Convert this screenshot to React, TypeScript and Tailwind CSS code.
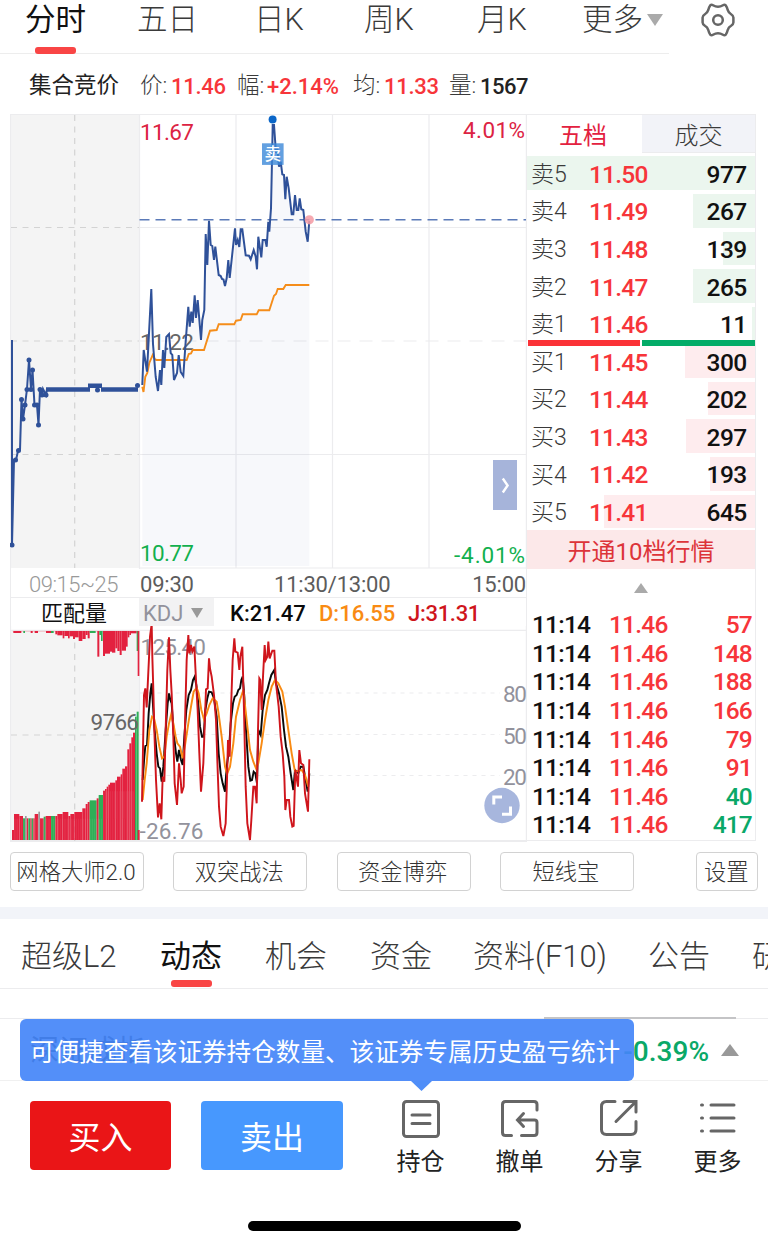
import React from 'react';

interface Level {
  label: string;
  price: string;
  volume: number;
}

interface Trade {
  volume: number;
  side: 'buy' | 'sell';
}

const MAX_VOLUME = 977;

const sellLevels: Level[] = [
  { label: '卖5', price: '11.50', volume: 977 },
  { label: '卖4', price: '11.49', volume: 267 },
  { label: '卖3', price: '11.48', volume: 139 },
  { label: '卖2', price: '11.47', volume: 265 },
  { label: '卖1', price: '11.46', volume: 11 },
];

const buyLevels: Level[] = [
  { label: '买1', price: '11.45', volume: 300 },
  { label: '买2', price: '11.44', volume: 202 },
  { label: '买3', price: '11.43', volume: 297 },
  { label: '买4', price: '11.42', volume: 193 },
  { label: '买5', price: '11.41', volume: 645 },
];

const trades: Trade[] = [
  { volume: 57, side: 'buy' },
  { volume: 148, side: 'buy' },
  { volume: 188, side: 'buy' },
  { volume: 166, side: 'buy' },
  { volume: 79, side: 'buy' },
  { volume: 91, side: 'buy' },
  { volume: 40, side: 'sell' },
  { volume: 417, side: 'sell' },
];

const auctionLine =
  '12,340 12,545 14,460 16,460 18,451 20,450 21.5,399 23,419 25,405 27,389 29,360 31,389 32.5,370 34.5,405 37,405 38.5,425 40,389 42,395 43,389 46,395 47,389';

const auctionDots = [
  [12, 545], [15.5, 460], [18.5, 450.5], [21.5, 399.5], [23, 419], [25, 405], [27, 389.5], [29, 360],
  [31, 389.5], [32.5, 370], [34.5, 405], [37, 405], [38.5, 425], [40, 389.5], [42, 395], [46, 395], [97.5, 390], [137.5, 385.5],
];

const priceLine =
  '142.3,385 143.7,350 147,371.7 151.3,289 153,344 155.7,377 158,391 160,370 161.3,385 163,350 164.3,368 166.3,337 169,334 170.7,353 172.3,355 174,380 177,373 178.7,355 180.7,372 183.3,376 185.3,346.7 188.3,306.7 189.7,326.7 191.3,311.7 192.7,323 194.7,295.3 196,318 197.7,300 201,340 202.3,320 204.3,310 205.7,234 207.3,265 209,220.7 210.7,245 212.3,246 214,260 215.3,246.7 218.7,275 220.7,276 222,279 223.5,279.5 225,286 226.7,278 228.3,260 229.7,278 235,228.3 236,245 237.7,240 239.3,247 240.7,229.3 242.3,229.3 245.7,255.3 249,255.7 250.7,259.3 253.7,250 255.7,256.7 257,269.3 258.3,236.7 261.3,257.3 262.7,240 265.3,240 266.7,246.7 268.3,221.7 269.3,231.7 271,208.3 272.3,146.7 272.7,125 274,125 276,153 277.3,147 279,166.7 280.7,161.7 282.3,174.3 284,175 285.3,199.3 286.7,176.7 288.7,188.3 291.7,214.3 293.3,214.3 295,195 296.7,210 298.3,210 299.7,198.3 301.3,209.3 303.3,210 305.7,231.7 307.7,241.7 309.3,221';

const averageLine =
  '142.3,386.7 143.5,392 145.3,376.7 147.3,373 149.3,363 152.7,355 155,359.5 156.7,360 186.7,360 188.7,354 191,353.5 192.7,350 204,350 210,330.7 216.7,330 218.7,324.3 234.3,324.3 236,320.7 240.7,320 242.7,314.3 256.7,314.3 258.7,310.3 269.3,310.3 274,295.7 276,294 277.7,289 283.3,289 285.7,285 309.3,285';

const jLine =
  '36,545 42,225 46,205 50,262 60,50 65,12 67,110 70,210 73,330 78,480 84,592 89,550 94,598 98,470 103,485 107,330 112,150 117,52 121,150 125,220 130,350 134,490 141,555 147,430 152,480 155,520 161,500 166,270 170,120 175,45 178,100 183,75 187,95 193,80 198,180 203,270 208,400 213,515 220,430 228,208 233,205 237,115 240,145 245,170 252,225 258,300 263,450 267,560 272,620 280,648 287,610 291,480 294,360 299,410 303,270 308,120 313,55 316,95 323,98 328,150 331,110 337,80 342,270 347,500 352,610 360,660 364,600 370,500 375,500 380,550 384,330 388,175 391,180 395,270 399,170 404,75 407,120 412,110 415,65 419,115 427,92 433,92 438,190 446,260 452,350 458,400 463,470 466,570 470,540 477,540 481,590 487,620 491,618 496,450 504,500 508,390 513,430 520,435 525,520 534,575 538,418';

const kLine =
  '38,480 43,410 46,378 51,375 56,280 61,220 65,190 68,240 73,320 80,400 85,440 90,445 95,485 100,440 107,330 113,250 117,220 121,240 125,250 131,340 138,400 142,425 147,390 153,420 158,435 163,350 169,270 176,225 183,210 189,180 194,170 199,195 204,240 210,320 216,350 221,350 226,270 232,235 237,215 245,217 252,235 260,290 266,400 272,460 278,490 285,515 290,440 297,390 302,310 309,250 314,230 320,225 325,210 330,205 334,180 338,170 343,230 348,330 355,440 361,482 366,480 371,455 376,460 381,490 385,330 392,345 398,270 405,225 412,210 417,190 424,165 433,150 438,190 447,220 455,260 462,330 468,380 475,410 482,460 490,510 495,450 505,460 512,440 520,440 527,480 533,515 538,460';

const dLine =
  '38,540 44,480 50,430 58,330 66,290 72,295 80,330 88,380 96,415 103,410 110,350 117,310 123,285 130,310 137,350 142,370 150,380 158,415 166,370 175,310 183,260 191,215 200,203 206,220 214,270 222,298 230,280 238,255 248,235 260,245 265,275 275,350 285,440 291,462 300,440 310,370 318,290 330,240 340,210 350,300 360,390 370,425 378,445 385,430 395,370 405,300 415,240 425,200 435,180 445,190 457,215 465,260 475,330 485,400 495,455 515,450 525,465 535,500';

const RED = '#e3213f';
const GREEN = '#2fae57';
const GRAY = '#9a9a9a';

// [x start, x end, y edge, colour], in thirds of a pixel
type Bar = [number, number, number, string];

const matchedBars: Bar[] = [
  [36, 42, 795, RED], [42, 58, 747, RED], [58, 69, 753, RED], [69, 75, 760, GREEN], [75, 80, 753, GRAY],
  [80, 85, 760, RED], [85, 91, 760, GREEN], [91, 95, 760, RED], [95, 100, 760, GREEN], [100, 104, 760, RED],
  [104, 115, 747, RED], [115, 120, 740, GRAY], [120, 131, 760, RED], [131, 137, 755, GREEN], [137, 153, 753, RED],
  [153, 166, 753, GREEN], [166, 172, 753, RED], [172, 188, 747, RED], [188, 205, 741, RED], [205, 211, 753, RED],
  [211, 223, 747, RED], [223, 247, 741, RED], [247, 257, 730, RED], [257, 263, 717, RED], [263, 269, 711, RED],
  [269, 290, 706, GREEN], [290, 296, 700, RED], [296, 309, 690, GREEN], [309, 315, 677, RED], [315, 320, 672, RED],
  [320, 325, 665, RED], [325, 330, 659, RED], [330, 346, 653, RED], [346, 351, 646, RED], [351, 362, 635, RED],
  [362, 367, 628, RED], [367, 375, 611, RED], [375, 382, 604, RED], [382, 388, 553, RED], [388, 394, 535, RED],
  [394, 399, 517, RED], [399, 405, 503, RED], [405, 410, 455, GREEN], [410, 416, 440, GREEN], [413, 419, 795, RED],
];

const unmatchedBars: Bar[] = [
  [40, 64, 204, RED], [70, 75, 204, GREEN], [92, 98, 204, RED], [104, 114, 204, RED], [138, 153, 204, RED],
  [153, 161, 204, GREEN], [166, 172, 208, RED], [172, 188, 211, RED], [188, 193, 220, RED], [193, 204, 213, RED],
  [204, 209, 220, RED], [209, 219, 214, RED], [219, 225, 222, RED], [225, 236, 217, RED], [236, 247, 228, RED],
  [247, 257, 222, RED], [257, 263, 210, RED], [263, 269, 220, RED], [269, 287, 204, GREEN], [292, 298, 275, RED],
  [298, 303, 210, GREEN], [303, 308, 228, GREEN], [309, 315, 273, RED], [315, 330, 266, RED], [330, 336, 260, RED],
  [336, 346, 263, RED], [346, 352, 250, RED], [352, 359, 258, RED], [359, 365, 270, RED], [365, 378, 257, RED],
  [378, 383, 245, RED], [383, 388, 217, RED], [388, 393, 210, RED], [393, 410, 205, RED], [410, 414, 258, GREEN],
  [413, 418, 333, RED],
];

interface LabelProps {
  x: number;
  y: number;
  width: number;
  fill: string;
  children: string;
}

function ChartLabel({ x, y, width, fill, children }: LabelProps) {
  return (
    <text x={x} y={y} textLength={width} fill={fill} fontSize={22.5} fontWeight={450} lengthAdjust="spacing">
      {children}
    </text>
  );
}

function PriceChart() {
  return (
    <svg className="block" width="517" height="455" viewBox="10 114 517 455" fill="none">
      <rect x="11" y="114" width="128.5" height="454" fill="#f4f4f4" />
      <g stroke="#ececee" strokeWidth="1.2">
        <path d="M10.5 114V569M139.5 114V569M526.4 114V569M10 114.5H527M139 568H527" />
        <path d="M236 115V568M332.5 115V568M429 115V568M139.5 227.5H526M139.5 454.5H526" />
        <path d="M139.5 341H526" strokeDasharray="13 9" />
      </g>
      <g stroke="#d3d3d3" strokeWidth="1.2" strokeDasharray="6 5.5">
        <path d="M74.7 115V568M11 227.5H139M11 341H139M11 454.5H139" />
      </g>
      <polygon points={`142.3,566 ${priceLine} 309.3,566`} fill="#3c5fa8" fillOpacity="0.045" />
      <ChartLabel x={140} y={350} width={54} fill="#666666">11.22</ChartLabel>
      <path d="M139.5 219.7H526" stroke="#5b7ab8" strokeWidth="1.6" strokeDasharray="10 6" />
      <polyline points={averageLine} stroke="#f58d1a" strokeWidth="1.9" />
      <polyline points={priceLine} stroke="#2f5199" strokeWidth="2" />
      <polyline points={auctionLine} stroke="#2f5199" strokeWidth="2" />
      <path d="M46 389.5H90M88 385.8H102M101 389.5H138" stroke="#2f5199" strokeWidth="4.6" />
      {auctionDots.map(([x, y], i) => (
        <circle key={i} cx={x} cy={y} r="2.5" fill="#2f5199" />
      ))}
      <circle cx="309.3" cy="219.8" r="4.6" fill="#f49aa3" fillOpacity="0.85" />
      <circle cx="272.6" cy="119.5" r="4" fill="#0a66c8" />
      <rect x="262" y="143.3" width="21.6" height="21.6" fill="#3c88d8" fillOpacity="0.8" />
      <text x="264.5" y="160.4" fontSize="16.5" fontWeight="500" fill="#ffffff">卖</text>
      <ChartLabel x={140} y={139.5} width={54} fill="#dc2343">11.67</ChartLabel>
      <ChartLabel x={463} y={137.8} width={62} fill="#dc2343">4.01%</ChartLabel>
      <ChartLabel x={140} y={560.8} width={54} fill="#12b04e">10.77</ChartLabel>
      <ChartLabel x={454} y={562.5} width={71} fill="#12b04e">-4.01%</ChartLabel>
      <rect x="493" y="460" width="24" height="50" fill="#a6b4da" />
      <path d="M502.8 478.5L507.6 485.5L502.8 492.5" stroke="#ffffff" strokeWidth="2.4" />
    </svg>
  );
}

function IndicatorChart() {
  return (
    <svg className="block" width="517" height="216" viewBox="10 626 517 216" fill="none">
      <rect x="11" y="631" width="128.5" height="210" fill="#f4f4f4" />
      <g stroke="#ececee" strokeWidth="1.2">
        <path d="M10.5 626V841M139.5 630V841M526.4 626V841M10 630.3H527" />
        <path d="M10 841H527" strokeWidth="2" />
        <path d="M139.5 693H500M139.5 734.5H500M139.5 775.5H500" strokeDasharray="4 5" />
      </g>
      <path d="M74.7 631V841M11 735H139" stroke="#d3d3d3" strokeWidth="1.2" strokeDasharray="6 5.5" />
      <g transform="translate(0 565) scale(0.33333)">
        <path d="M38 199H416" stroke="#e3213f" strokeOpacity="0.35" strokeWidth="2" />
        {unmatchedBars.map(([x0, x1, y, color], i) => (
          <rect key={i} x={x0} y={198} width={x1 - x0} height={y - 198} fill={color} />
        ))}
        {matchedBars.map(([x0, x1, y, color], i) => (
          <rect key={i} x={x0} y={y} width={x1 - x0} height={825 - y} fill={color} />
        ))}
        <path d="M42 793H405" stroke="#ffffff" strokeOpacity="0.16" strokeWidth="64" strokeDasharray="1.2 4.15" />
        <path d="M310 720H405" stroke="#ffffff" strokeOpacity="0.16" strokeWidth="82" strokeDasharray="1.2 4.15" />
      </g>
      <ChartLabel x={90.5} y={730} width={48.5} fill="#666666">9766</ChartLabel>
      <ChartLabel x={140.5} y={654.5} width={65.5} fill="#92929c">125.40</ChartLabel>
      <ChartLabel x={139.5} y={838.5} width={64} fill="#92929c">-26.76</ChartLabel>
      <ChartLabel x={503} y={702.3} width={24} fill="#92929c">80</ChartLabel>
      <ChartLabel x={503} y={743.6} width={24} fill="#92929c">50</ChartLabel>
      <ChartLabel x={503} y={785} width={24} fill="#92929c">20</ChartLabel>
      <g transform="translate(130 620) scale(0.33333)" strokeWidth="5.8">
        <polyline points={kLine} stroke="#0a0a0a" />
        <polyline points={dLine} stroke="#f98b13" />
        <polyline points={jLine} stroke="#cf151c" />
      </g>
      <circle cx="502" cy="805.5" r="17.7" fill="#a7b6dd" />
      <path d="M493.8 804.5V797H502M510.5 806.5V814.2H502" stroke="#ffffff" strokeWidth="3" />
    </svg>
  );
}

function LevelRow({ level, sell }: { level: Level; sell?: boolean }) {
  return (
    <div className="relative flex h-[33.6px] items-center pl-[4px] pr-[9px] pt-1">
      <div
        className={sell ? 'absolute inset-y-0 right-0 bg-[#ebf6ee]' : 'absolute inset-y-0 right-0 bg-[#feecee]'}
        style={{ width: `${(level.volume / MAX_VOLUME) * 100}%` }}
      />
      <span className="relative w-[58px] text-[23px] font-light text-[#3a3a3a]">{level.label}</span>
      <span className="relative flex-1 text-[24.5px] font-medium tracking-[-0.8px] text-[#f7353a]">{level.price}</span>
      <span className="relative -mr-[0.6px] text-[24.5px] font-medium tracking-[-0.6px] text-[#111]">{level.volume}</span>
    </div>
  );
}

function OrderBook() {
  return (
    <div className="flex h-[727px] w-[229px] flex-col border-r border-b border-t border-[#ececee]">
      <div className="flex h-[39px] text-2xl">
        <div className="flex w-[115px] items-center justify-center pt-1 pr-[3px] text-[#e3213f]">五档</div>
        <div className="flex flex-1 items-center justify-center border-b border-[#ececee] bg-[#f2f3f8] pt-1 font-light text-[#3a3a3a]">成交</div>
      </div>
      <div className="mt-[3px] flex flex-col gap-1">
        {sellLevels.map((level) => (
          <LevelRow key={level.label} level={level} sell />
        ))}
      </div>
      <div className="relative z-10 -mb-0.5 flex h-1.5 shrink-0 gap-0.5 pl-px">
        <div className="w-[112px] bg-[#fb3237]" />
        <div className="flex-1 bg-[#03ac68]" />
      </div>
      <div className="flex flex-col gap-1">
        {buyLevels.map((level) => (
          <LevelRow key={level.label} level={level} />
        ))}
      </div>
      <div className="mt-0.5 flex h-[39px] shrink-0 items-center justify-center bg-[#fce8e9] pt-1 text-2xl text-[#dd3439]">
        开通10档行情
      </div>
      <div className="flex h-[42px] shrink-0 items-center justify-center pb-1">
        <svg width="14" height="10" viewBox="0 0 14 10" fill="#aaaaaa">
          <path d="M7 0L14 10H0Z" />
        </svg>
      </div>
      <div className="flex flex-col">
        {trades.map((trade, i) => (
          <div key={i} className="flex h-[28.6px] items-center pl-[5px] pr-[3px] text-[24.5px] leading-none font-medium tracking-[-0.8px]">
            <span className="w-[77px] text-[#111]">11:14</span>
            <span className="flex-1 text-[#f7353a]">11.46</span>
            <span className={trade.side === 'buy' ? 'text-[#f7353a]' : 'text-[#0aa868]'}>{trade.volume}</span>
          </div>
        ))}
      </div>
    </div>
  );
}

function TopTabs() {
  return (
    <div className="flex h-[54px]">
      <div className="relative flex h-[54px] w-[669px] border-b-[1.5px] border-[#ededed] pl-[25px] text-[30.5px] leading-[40px] font-light text-[#3a3a3a]">
        <span className="w-[112px] shrink-0 font-normal text-[#111]">分时</span>
        <span className="w-[117px] shrink-0">五日</span>
        <span className="w-[110px] shrink-0">日K</span>
        <span className="w-[113px] shrink-0">周K</span>
        <span className="w-[105px] shrink-0">月K</span>
        <span className="shrink-0">更多</span>
        <svg className="mt-[14px] ml-1" width="16" height="12" viewBox="0 0 16 12" fill="#aaaaaa">
          <path d="M0 0H16L8 12Z" />
        </svg>
        <div className="absolute left-[35px] top-[47px] h-[7px] w-[41px] rounded-[3px] bg-[#f94545]" />
      </div>
      <svg className="mt-[3px] ml-8" width="34" height="34" viewBox="0 0 34 34" fill="none" stroke="#666666" strokeWidth="2.5" strokeLinejoin="round">
        <path d="M9.2 2.4 Q10.4 1.2 12 2.2 Q17 5.4 22 2.2 Q23.6 1.2 24.8 2.4 Q26 4 26.8 7.2 Q27.6 9.8 29.8 11 Q32.4 12.6 32.4 14.6 V19.4 Q32.4 21.4 29.8 23 Q27.6 24.2 26.8 26.8 Q26 30 24.8 31.6 Q23.6 32.8 22 31.8 Q17 28.6 12 31.8 Q10.4 32.8 9.2 31.6 Q8 30 7.2 26.8 Q6.4 24.2 4.2 23 Q1.6 21.4 1.6 19.4 V14.6 Q1.6 12.6 4.2 11 Q6.4 9.8 7.2 7.2 Q8 4 9.2 2.4Z" />
        <circle cx="17" cy="17" r="4.8" />
      </svg>
    </div>
  );
}

function AuctionInfo() {
  return (
    <div className="flex h-[60px] items-center pt-1 pl-[29px] text-[22.5px] font-light whitespace-nowrap text-[#3a3a3a]">
      <span className="w-[111px] font-normal text-[#222]">集合竞价</span>
      <span className="w-[31px]">价:</span>
      <span className="w-[66px] text-[22px] font-medium tracking-[-0.3px] text-[#f7353a]">11.46</span>
      <span className="w-[30px]">幅:</span>
      <span className="w-[86px] text-[22px] font-medium text-[#f7353a]">+2.14%</span>
      <span className="w-[31px]">均:</span>
      <span className="w-[65px] text-[22px] font-medium tracking-[-0.3px] text-[#f7353a]">11.33</span>
      <span className="w-[31px]">量:</span>
      <span className="text-[22px] font-medium tracking-[-0.5px] text-[#222]">1567</span>
    </div>
  );
}

function ActionIcon({ label, children }: { label: string; children: React.ReactNode }) {
  return (
    <div className="flex w-[99px] flex-col items-center">
      <svg width="42" height="42" viewBox="0 0 42 42" fill="none" stroke="#666666" strokeWidth="3" strokeLinecap="round">
        {children}
      </svg>
      <span className="mt-1 text-2xl leading-9 text-[#222]">{label}</span>
    </div>
  );
}

export default function App() {
  return (
    <div className="h-[1248px] w-[768px] overflow-hidden bg-white font-['Roboto','Noto_Sans_CJK_SC',sans-serif]">
      <TopTabs />
      <AuctionInfo />

      <div className="flex h-[727px] pl-2.5">
        <div className="w-[517px]">
          <PriceChart />
          <div className="flex h-[29px] items-center border-x border-b border-[#ececee] pt-0.5 text-[22px] font-[450] tracking-[-0.2px] whitespace-nowrap text-[#5c5c5c]">
            <span className="w-[129px] pl-[18px] font-light tracking-[-0.5px] text-[#999]">09:15~25</span>
            <span className="w-[134px]">09:30</span>
            <span className="flex-1">11:30/13:00</span>
            <span>15:00</span>
          </div>
          <div className="flex h-[28px] items-center border-x border-[#ececee] text-[22px] font-medium whitespace-nowrap">
            <span className="w-[128px] pt-0.5 pl-[30px] font-normal text-[#111]">匹配量</span>
            <span className="flex h-[28px] w-[75px] items-center bg-[#f2f2f3] pt-0.5 pl-1 font-normal text-[#92929c]">
              KDJ
              <svg className="ml-2" width="12" height="10" viewBox="0 0 12 10" fill="#999999">
                <path d="M0 0H12L6 10Z" />
              </svg>
            </span>
            <span className="w-[89px] pt-0.5 pl-4 text-[#0a0a0a]">K:21.47</span>
            <span className="w-[89px] pt-0.5 pl-4 text-[#f98b13]">D:16.55</span>
            <span className="pt-0.5 pl-4 tracking-[-0.3px] text-[#cf151c]">J:31.31</span>
          </div>
          <IndicatorChart />
        </div>
        <OrderBook />
      </div>

      <div className="mt-[11px] flex h-[39px] items-stretch gap-[29.3px] pl-2.5 text-[22.3px] leading-none font-light text-[#333]">
        {['网格大师2.0', '双突战法', '资金博弈', '短线宝'].map((name) => (
          <button key={name} className="w-[134px] shrink-0 rounded border-[1.5px] border-[#d2d2d2] pt-0.5 pr-0.5 whitespace-nowrap">
            {name}
          </button>
        ))}
        <button className="ml-[33px] w-[62px] rounded border-[1.5px] border-[#d2d2d2] pt-0.5 pr-0.5">设置</button>
      </div>

      <div className="mt-4 h-3 bg-[#f2f4f9]" />

      <div className="relative flex h-[70px] border-b-[1.5px] border-[#ececee] pl-[21px] text-[31px] leading-[76px] font-light whitespace-nowrap text-[#3a3a3a]">
        <span className="w-[139px] shrink-0">超级L2</span>
        <span className="w-[105px] shrink-0 font-normal text-[#111]">动态</span>
        <span className="w-[105px] shrink-0">机会</span>
        <span className="w-[103px] shrink-0">资金</span>
        <span className="w-[175px] shrink-0">资料(F10)</span>
        <span className="w-[104px] shrink-0">公告</span>
        <span className="shrink-0">研</span>
        <div className="absolute left-[171px] top-[61px] h-[7px] w-[41px] rounded-[3px] bg-[#f94545]" />
      </div>

      <div className="flex h-[30px] justify-end border-b-[1.5px] border-[#ececee]">
        <div className="mt-[28px] mr-8 h-0.5 w-[192px] bg-[#c4c4c6]" />
      </div>

      <div className="relative flex h-[62px] items-center border-b-[1.5px] border-[#f0f0f0] pt-1 pr-[29px] pl-[30px] text-[29px]">
        <span className="flex-1 text-[#222]">深证成指</span>
        <span className="text-[28px] font-medium text-[#0aa868]">-0.39%</span>
        <svg className="ml-3 -mt-1" width="18" height="12" viewBox="0 0 18 12" fill="#999999">
          <path d="M9 0L18 12H0Z" />
        </svg>
        <div className="absolute left-5 top-0 flex h-[62px] w-[614px] items-center justify-center rounded-[6px] bg-[#4485f8]/92 pt-1.5 pr-1 text-[24.6px] whitespace-nowrap text-white">
          可便捷查看该证券持仓数量、该证券专属历史盈亏统计
          <svg className="absolute left-[391px] top-[62px]" width="21" height="10" viewBox="0 0 21 10" fill="#4f8ef8">
            <path d="M0 0H21L10.5 10Z" />
          </svg>
        </div>
      </div>

      <div className="flex h-[140px] pt-[20px] pl-[30px]">
        <button className="h-[69px] w-[141px] rounded bg-[#ea1517] pt-1 text-[32px] text-white">买入</button>
        <button className="ml-[30px] h-[69px] w-[142px] rounded bg-[#4798fe] pt-1 text-[32px] text-white">卖出</button>
        <div className="-mt-[3px] ml-[28px] flex">
          <ActionIcon label="持仓">
            <rect x="3.5" y="3.5" width="35" height="35" rx="3" />
            <path d="M12 17H30M12 25.5H30" />
          </ActionIcon>
          <ActionIcon label="撤单">
            <path d="M38 12V6.5Q38 3.5 35 3.5H6.5Q3.5 3.5 3.5 6.5V34.5Q3.5 37.5 6.5 37.5H12.5" />
            <path d="M22.5 37.5H35Q38 37.5 38 34.5V24.5Q38 22 35.5 22H19.5M24.5 15.5L18.5 22L24.5 28.5" />
          </ActionIcon>
          <ActionIcon label="分享">
            <path d="M17 3.5H8.5Q3.5 3.5 3.5 8.5V31.5Q3.5 36.5 8.5 36.5H33Q38 36.5 38 31.5V23.5" />
            <path d="M26 3.5H38V14M38 3.5L18 23.5" />
          </ActionIcon>
          <ActionIcon label="更多">
            <path d="M4.5 7H5.5M4.5 20H5.5M4.5 33H5.5M14 7H37M14 20H37M14 33H37" />
          </ActionIcon>
        </div>
      </div>

      <div className="mx-auto h-2.5 w-[273px] rounded-full bg-black" />
    </div>
  );
}
